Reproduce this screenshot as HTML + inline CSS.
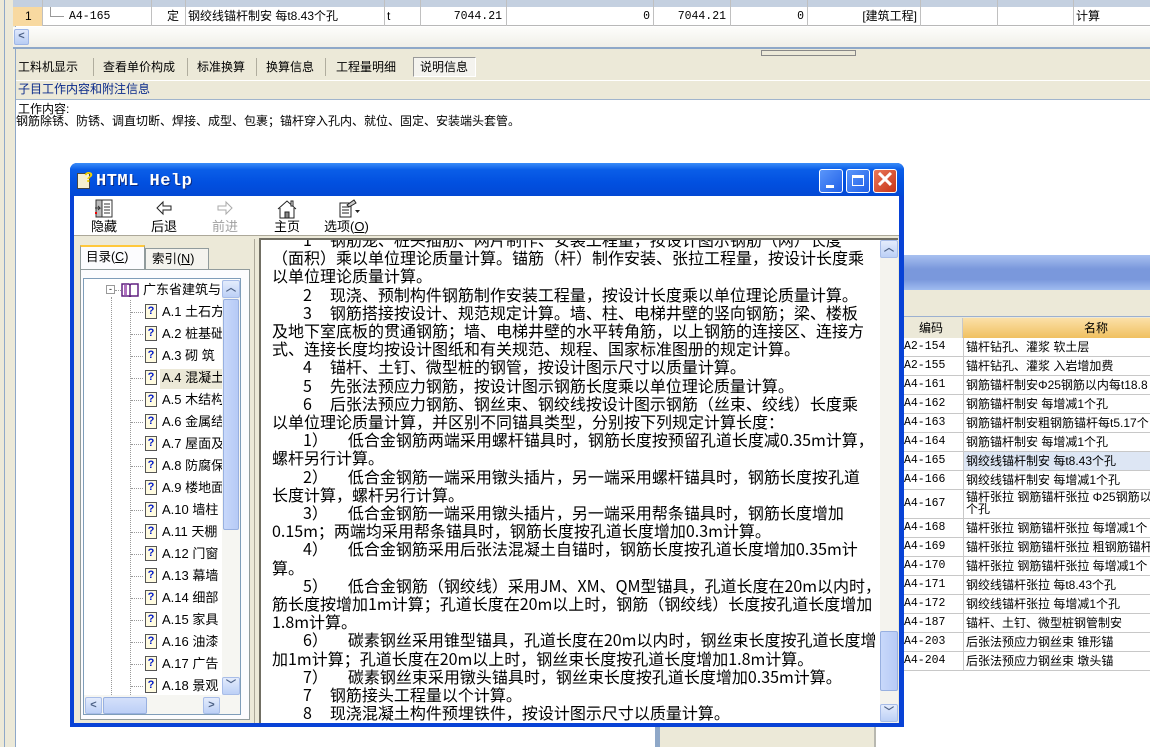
<!DOCTYPE html>
<html><head><meta charset="utf-8">
<style>
*{margin:0;padding:0;box-sizing:border-box}
body{width:1150px;height:747px;overflow:hidden;position:relative;background:#fff;font-family:"Liberation Sans","Noto Sans CJK SC",sans-serif;font-size:12px;color:#000}
.a{position:absolute}
.t{position:absolute;white-space:nowrap;line-height:14px}
.row{position:absolute;left:903px;width:247px;height:19px;border-bottom:1px solid #c8c8c8;background:#fff}
.row span{position:absolute;top:2px;white-space:nowrap;font-size:12px;line-height:14px}
.row .c{left:1px;font-family:"Liberation Mono",monospace;font-size:11.5px}
.row .n{left:63px}
.ln{position:absolute;left:270px;white-space:pre;font-family:"Noto Sans CJK SC",sans-serif;font-size:16px;line-height:18.2px;height:18.2px}
.ln i{display:inline-block}
.p{width:31px}.g{width:18px}.g2{width:20px}
.ti{position:absolute;white-space:nowrap;font-size:13px;line-height:16px}
.qi{position:absolute;width:12px;height:15px;border:1px solid #555;background:#fffbe0;color:#0018c8;font:bold 11px/13px "Liberation Sans",sans-serif;text-align:center}
.dot{position:absolute;border-top:1px dotted #999;height:0}
</style></head><body>

<div class="a" style="left:0;top:0;width:16px;height:747px;background:#ece9d8"></div>
<div class="a" style="left:4px;top:0;width:1px;height:747px;background:#8fa8c8"></div>
<div class="a" style="left:15px;top:0;width:1px;height:747px;background:#8fa8c8"></div>

<div class="a" style="left:13px;top:0;width:1137px;height:7px;background:#c4d0e0"></div>
<div class="a" style="left:13px;top:7px;width:1137px;height:19px;background:#fff;border-bottom:1px solid #b8b8b8"></div>
<div class="a" style="left:13px;top:7px;width:29px;height:19px;background:#f8d9a0"></div>
<div class="t" style="left:25px;top:9px">1</div>
<div class="a" style="left:50px;top:7px;width:1px;height:10px;background:#999"></div>
<div class="a" style="left:50px;top:16px;width:14px;height:1px;background:#999"></div>
<div class="t" style="left:69px;top:10px;font-family:'Liberation Mono',monospace;font-size:11.5px">A4-165</div>
<div class="t" style="left:167px;top:9px">定</div>
<div class="t" style="left:188px;top:9px">钢绞线锚杆制安 每t8.43个孔</div>
<div class="t" style="left:387px;top:9px">t</div>
<div class="t" style="left:444px;top:10px;width:58px;text-align:right;font-family:'Liberation Mono',monospace;font-size:11.5px">7044.21</div>
<div class="t" style="left:620px;top:10px;width:30px;text-align:right;font-family:'Liberation Mono',monospace;font-size:11.5px">0</div>
<div class="t" style="left:668px;top:10px;width:58px;text-align:right;font-family:'Liberation Mono',monospace;font-size:11.5px">7044.21</div>
<div class="t" style="left:774px;top:10px;width:30px;text-align:right;font-family:'Liberation Mono',monospace;font-size:11.5px">0</div>
<div class="t" style="left:860px;top:9px;width:57px;text-align:right">[建筑工程]</div>
<div class="t" style="left:1076px;top:9px">计算</div>
<div class="a" style="left:42px;top:0;width:1px;height:26px;background:#c0c0c0"></div>
<div class="a" style="left:151px;top:0;width:1px;height:26px;background:#c0c0c0"></div>
<div class="a" style="left:185px;top:0;width:1px;height:26px;background:#c0c0c0"></div>
<div class="a" style="left:384px;top:0;width:1px;height:26px;background:#c0c0c0"></div>
<div class="a" style="left:420px;top:0;width:1px;height:26px;background:#c0c0c0"></div>
<div class="a" style="left:506px;top:0;width:1px;height:26px;background:#c0c0c0"></div>
<div class="a" style="left:653px;top:0;width:1px;height:26px;background:#c0c0c0"></div>
<div class="a" style="left:730px;top:0;width:1px;height:26px;background:#c0c0c0"></div>
<div class="a" style="left:807px;top:0;width:1px;height:26px;background:#c0c0c0"></div>
<div class="a" style="left:920px;top:0;width:1px;height:26px;background:#c0c0c0"></div>
<div class="a" style="left:997px;top:0;width:1px;height:26px;background:#c0c0c0"></div>
<div class="a" style="left:1073px;top:0;width:1px;height:26px;background:#c0c0c0"></div>
<div class="a" style="left:13px;top:27px;width:1137px;height:20px;background:linear-gradient(#fdfdfb,#f0efe8)"></div>
<div class="a" style="left:14px;top:29px;width:15px;height:16px;background:linear-gradient(#dfe8fb,#b8cdf4);border:1px solid #9eb6e6;border-radius:2px;color:#4d6185;font:bold 11px/13px sans-serif;text-align:center">&lt;</div>
<div class="a" style="left:13px;top:47px;width:1137px;height:2px;background:#8fa8c8"></div>
<div class="a" style="left:16px;top:49px;width:1134px;height:31px;background:#ece9d8"></div>
<div class="a" style="left:761px;top:50px;width:95px;height:6px;border:1px solid #888;background:#ece9d8"></div>
<div class="t" style="left:18px;top:60px">工料机显示</div>
<div class="a" style="left:93px;top:58px;width:1px;height:18px;background:#b0ad9e"></div>
<div class="t" style="left:103px;top:60px">查看单价构成</div>
<div class="a" style="left:187px;top:58px;width:1px;height:18px;background:#b0ad9e"></div>
<div class="t" style="left:197px;top:60px">标准换算</div>
<div class="a" style="left:256px;top:58px;width:1px;height:18px;background:#b0ad9e"></div>
<div class="t" style="left:266px;top:60px">换算信息</div>
<div class="a" style="left:325px;top:58px;width:1px;height:18px;background:#b0ad9e"></div>
<div class="t" style="left:336px;top:60px">工程量明细</div>
<div class="a" style="left:413px;top:57px;width:63px;height:20px;border:1px solid #999;border-right-color:#fff;border-bottom-color:#fff;background:#f4f3ee"></div>
<div class="t" style="left:420px;top:60px">说明信息</div>
<div class="a" style="left:16px;top:80px;width:1134px;height:1px;background:#fff"></div>
<div class="a" style="left:16px;top:81px;width:1134px;height:19px;background:#ece9d8;border-bottom:1px solid #a0b4cc"></div>
<div class="t" style="left:18px;top:82px;color:#0a2a8a">子目工作内容和附注信息</div>
<div class="t" style="left:18px;top:103px;line-height:12px">工作内容:</div>
<div class="t" style="left:16px;top:115px;line-height:12px">钢筋除锈、防锈、调直切断、焊接、成型、包裹；锚杆穿入孔内、就位、固定、安装端头套管。</div>

<div class="a" style="left:655px;top:255px;width:495px;height:492px;background:#ece9d8;border-left:5px solid #8fa8c8"></div>
<div class="a" style="left:660px;top:255px;width:490px;height:35px;background:linear-gradient(#a8c0f0,#7a98dc 40%,#7a98dc 70%,#a0bcf0)"></div>
<div class="a" style="left:660px;top:290px;width:490px;height:27px;background:#ece9d8;border-bottom:1px solid #9cb0d0"></div>
<div class="a" style="left:876px;top:671px;width:274px;height:76px;background:#fff"></div>
<div class="a" style="left:874px;top:671px;width:2px;height:76px;background:#b8b8b0"></div>
<div class="a" style="left:903px;top:318px;width:60px;height:20px;background:#ece9d8;border-right:1px solid #c8c8c8"></div>
<div class="a" style="left:963px;top:318px;width:187px;height:20px;background:linear-gradient(#fbe0a8,#f0c060)"></div>
<div class="t" style="left:919px;top:321px">编码</div>
<div class="t" style="left:1084px;top:321px">名称</div>
<div class="row" style="top:338px"><span class="c">A2-154</span><span class="n">锚杆钻孔、灌浆 软土层</span></div>
<div class="row" style="top:357px"><span class="c">A2-155</span><span class="n">锚杆钻孔、灌浆 入岩增加费</span></div>
<div class="row" style="top:376px"><span class="c">A4-161</span><span class="n">钢筋锚杆制安Φ25钢筋以内每t18.8</span></div>
<div class="row" style="top:395px"><span class="c">A4-162</span><span class="n">钢筋锚杆制安 每增减1个孔</span></div>
<div class="row" style="top:414px"><span class="c">A4-163</span><span class="n">钢筋锚杆制安粗钢筋锚杆每t5.17个</span></div>
<div class="row" style="top:433px"><span class="c">A4-164</span><span class="n">钢筋锚杆制安 每增减1个孔</span></div>
<div class="row" style="top:452px"><span class="c">A4-165</span><span class="n" style="left:61px;top:0;height:18px;width:186px;background:#dde6f4;padding:2px 2px">钢绞线锚杆制安 每t8.43个孔</span></div>
<div class="row" style="top:471px"><span class="c">A4-166</span><span class="n">钢绞线锚杆制安 每增减1个孔</span></div>
<div class="row" style="top:490px;height:29px"><span class="c" style="top:7px">A4-167</span><span class="n" style="top:1px;line-height:12px">锚杆张拉 钢筋锚杆张拉 Φ25钢筋以<br>个孔</span></div>
<div class="row" style="top:519px"><span class="c">A4-168</span><span class="n">锚杆张拉 钢筋锚杆张拉 每增减1个</span></div>
<div class="row" style="top:538px"><span class="c">A4-169</span><span class="n">锚杆张拉 钢筋锚杆张拉 粗钢筋锚杆</span></div>
<div class="row" style="top:557px"><span class="c">A4-170</span><span class="n">锚杆张拉 钢筋锚杆张拉 每增减1个</span></div>
<div class="row" style="top:576px"><span class="c">A4-171</span><span class="n">钢绞线锚杆张拉 每t8.43个孔</span></div>
<div class="row" style="top:595px"><span class="c">A4-172</span><span class="n">钢绞线锚杆张拉 每增减1个孔</span></div>
<div class="row" style="top:614px"><span class="c">A4-187</span><span class="n">锚杆、土钉、微型桩钢管制安</span></div>
<div class="row" style="top:633px"><span class="c">A4-203</span><span class="n">后张法预应力钢丝束 锥形锚</span></div>
<div class="row" style="top:652px"><span class="c">A4-204</span><span class="n">后张法预应力钢丝束 墩头锚</span></div>
<div class="a" style="left:963px;top:338px;width:1px;height:333px;background:#c8c8c8"></div>

<!-- DIALOG -->
<div class="a" style="left:70px;top:163px;width:834px;height:564px;background:#0842d6;border-radius:7px 7px 0 0"></div>
<div class="a" style="left:70px;top:163px;width:834px;height:33px;border-radius:7px 7px 0 0;background:linear-gradient(#3a8cf8,#0a5ee8 20%,#0250e0 60%,#0348d4)"></div>
<div class="a" style="left:77px;top:173px;width:13px;height:16px;background:#f6f0d0;border:1px solid #444"></div>
<div class="a" style="left:84px;top:170px;color:#f4d200;font:bold 15px/15px 'Liberation Sans',sans-serif">?</div>
<div class="t" style="left:96px;top:172px;color:#fff;font:bold 17px/20px 'Liberation Mono',monospace;letter-spacing:0.5px;text-shadow:1px 1px #0a2a80">HTML Help</div>
<div class="a" style="left:819px;top:169px;width:24px;height:24px;border:1px solid #fff;border-radius:3px;background:linear-gradient(135deg,#5a96fa,#2060e8)"></div>
<div class="a" style="left:826px;top:185px;width:8px;height:3px;background:#fff"></div>
<div class="a" style="left:846px;top:169px;width:24px;height:24px;border:1px solid #fff;border-radius:3px;background:linear-gradient(135deg,#5a96fa,#2060e8)"></div>
<div class="a" style="left:852px;top:175px;width:12px;height:11px;border:1px solid #fff;border-top-width:3px"></div>
<div class="a" style="left:873px;top:169px;width:24px;height:24px;border:1px solid #fff;border-radius:3px;background:linear-gradient(135deg,#e8785a,#c83418)"></div>
<div class="a" style="left:873px;top:168px;width:24px;height:24px;color:#fff;font:bold 22px/24px 'Liberation Sans',sans-serif;text-align:center">✕</div>
<div class="a" style="left:74px;top:196px;width:825px;height:527px;background:#ece9d8"></div>
<div class="a" style="left:74px;top:196px;width:825px;height:40px;background:#fff;border-bottom:1px solid #aca899"></div>
<svg class="a" style="left:94px;top:199px" width="20" height="20" viewBox="0 0 20 20"><rect x="2" y="1" width="16" height="17" fill="#fff" stroke="#333"/><rect x="2" y="1" width="6" height="17" fill="#bbb" stroke="#333"/><path d="M10 5h6M10 8h6M10 11h6M10 14h6" stroke="#333"/><path d="M1 9h5l-2-2M6 9l-2 2" stroke="#333" fill="none"/><rect x="1" y="13" width="2" height="2" fill="#e00"/></svg>
<div class="t" style="left:91px;top:219px;font-size:13px;line-height:15px">隐藏</div>
<svg class="a" style="left:155px;top:200px" width="18" height="16"><path d="M2 8l6-6v4h8v4H8v4z" fill="#fff" stroke="#222"/></svg>
<div class="t" style="left:151px;top:219px;font-size:13px;line-height:15px">后退</div>
<svg class="a" style="left:216px;top:200px" width="18" height="16"><path d="M16 8l-6-6v4H2v4h8v4z" fill="#fff" stroke="#aaa"/></svg>
<div class="t" style="left:212px;top:219px;font-size:13px;line-height:15px;color:#a0a0a0">前进</div>
<svg class="a" style="left:276px;top:199px" width="22" height="20"><path d="M2 10L11 2l9 8M4 9v10h14V9" fill="#fff" stroke="#222"/><rect x="9" y="13" width="4" height="6" fill="#888" stroke="#222"/><rect x="15" y="2" width="2" height="5" fill="#fff" stroke="#222"/></svg>
<div class="t" style="left:274px;top:219px;font-size:13px;line-height:15px">主页</div>
<svg class="a" style="left:337px;top:199px" width="24" height="20"><rect x="3" y="4" width="11" height="14" fill="#fff" stroke="#222"/><path d="M5 8h7M5 11h7M5 14h7" stroke="#222"/><path d="M10 6l7-5 2 3-7 4z" fill="#ccc" stroke="#222"/><path d="M18 11h5l-2.5 3z" fill="#222"/></svg>
<div class="t" style="left:324px;top:219px;font-size:13px;line-height:15px">选项(<u>O</u>)</div>

<div class="a" style="left:76px;top:239px;width:179px;height:484px;background:#ece9d8;border-right:1px solid #aca899"></div>
<div class="a" style="left:80px;top:245px;width:65px;height:24px;background:#fcfcfe;border:1px solid #919b9c;border-bottom:none;border-top:2px solid #ffc83c"></div>
<div class="t" style="left:86px;top:250px;font-size:12.5px">目录(<u>C</u>)</div>
<div class="a" style="left:145px;top:248px;width:64px;height:21px;background:#f4f3ee;border:1px solid #919b9c;border-bottom:none"></div>
<div class="t" style="left:152px;top:252px;font-size:12.5px">索引(<u>N</u>)</div>
<div class="a" style="left:80px;top:269px;width:170px;height:451px;background:#fcfcfe;border:1px solid #919b9c"></div>
<div class="a" style="left:83px;top:278px;width:158px;height:437px;background:#fff;border:1px solid #7f9db9"></div>
<div class="a" style="left:111px;top:297px;width:0;height:400px;border-left:1px dotted #999"></div>
<div class="a" style="left:130px;top:300px;width:0;height:397px;border-left:1px dotted #999"></div>
<div class="a" style="left:106px;top:285px;width:9px;height:9px;border:1px solid #999;background:#fff;font:9px/7px sans-serif;text-align:center">-</div>
<div class="dot" style="left:115px;top:290px;width:6px"></div>
<svg class="a" style="left:121px;top:282px" width="18" height="15"><path d="M1 2h7l1 1 1-1h7v12h-7l-1 1-1-1H1z" fill="#fff" stroke="#602080" stroke-width="1.5"/><path d="M5 3v10M9 3v11" stroke="#602080" stroke-width="1.5"/><rect x="3" y="3" width="3" height="10" fill="#b070c0"/></svg>
<div class="ti" style="left:143px;top:282px">广东省建筑与</div>
<div class="a" style="left:160px;top:369px;width:62px;height:20px;background:#ece9d8"></div>
<div id="tree"></div>
<div class="a" style="left:222px;top:280px;width:18px;height:415px;background:#f6f6f2"></div>
<div class="a" style="left:222px;top:280px;width:18px;height:18px;background:linear-gradient(#e4ecfc,#bcd0f6);border:1px solid #a8bde8;border-radius:2px;color:#4d6185;font:bold 10px/15px sans-serif;text-align:center">︿</div>
<div class="a" style="left:223px;top:299px;width:16px;height:231px;background:linear-gradient(90deg,#c8d8fa,#b6caf6);border:1px solid #98b0e0;border-radius:2px"></div>
<div class="a" style="left:222px;top:677px;width:18px;height:18px;background:linear-gradient(#e4ecfc,#bcd0f6);border:1px solid #a8bde8;border-radius:2px;color:#4d6185;font:bold 10px/16px sans-serif;text-align:center">﹀</div>
<div class="a" style="left:84px;top:695px;width:156px;height:19px;background:#f6f6f2"></div>
<div class="a" style="left:85px;top:697px;width:17px;height:17px;background:linear-gradient(#e4ecfc,#bcd0f6);border:1px solid #a8bde8;border-radius:2px;color:#4d6185;font:bold 11px/15px sans-serif;text-align:center">&lt;</div>
<div class="a" style="left:103px;top:697px;width:44px;height:17px;background:linear-gradient(#d4e0fa,#bccff6);border:1px solid #98b0e0;border-radius:2px"></div>
<div class="a" style="left:203px;top:697px;width:17px;height:17px;background:linear-gradient(#e4ecfc,#bcd0f6);border:1px solid #a8bde8;border-radius:2px;color:#4d6185;font:bold 11px/15px sans-serif;text-align:center">&gt;</div>

<div class="a" style="left:257px;top:236px;width:642px;height:487px;background:#ece9d8"></div>
<div class="a" style="left:259px;top:238px;width:639px;height:485px;background:#fff;border-top:2px solid #716f64;border-left:2px solid #716f64;overflow:hidden">
<div style="position:absolute;left:-259px;top:-240px;width:1150px;height:747px">
<div class="ln" style="top:230px"><i class="p"></i>1<i class="g"></i>钢筋笼、桩头插筋、网片制作、安装工程量，按设计图示钢筋（网）长度</div>
<div class="ln" style="top:248.2px">（面积）乘以单位理论质量计算。锚筋（杆）制作安装、张拉工程量，按设计长度乘</div>
<div class="ln" style="top:266.4px">以单位理论质量计算。</div>
<div class="ln" style="top:284.6px"><i class="p"></i>2<i class="g"></i>现浇、预制构件钢筋制作安装工程量，按设计长度乘以单位理论质量计算。</div>
<div class="ln" style="top:302.8px"><i class="p"></i>3<i class="g"></i>钢筋搭接按设计、规范规定计算。墙、柱、电梯井壁的竖向钢筋；梁、楼板</div>
<div class="ln" style="top:321px">及地下室底板的贯通钢筋；墙、电梯井壁的水平转角筋，以上钢筋的连接区、连接方</div>
<div class="ln" style="top:339.2px">式、连接长度均按设计图纸和有关规范、规程、国家标准图册的规定计算。</div>
<div class="ln" style="top:357.4px"><i class="p"></i>4<i class="g"></i>锚杆、土钉、微型桩的钢管，按设计图示尺寸以质量计算。</div>
<div class="ln" style="top:375.6px"><i class="p"></i>5<i class="g"></i>先张法预应力钢筋，按设计图示钢筋长度乘以单位理论质量计算。</div>
<div class="ln" style="top:393.8px"><i class="p"></i>6<i class="g"></i>后张法预应力钢筋、钢丝束、钢绞线按设计图示钢筋（丝束、绞线）长度乘</div>
<div class="ln" style="top:412px">以单位理论质量计算，并区别不同锚具类型，分别按下列规定计算长度：</div>
<div class="ln" style="top:430.2px"><i class="p"></i>1）<i class="g2"></i>低合金钢筋两端采用螺杆锚具时，钢筋长度按预留孔道长度减0.35m计算，</div>
<div class="ln" style="top:448.4px">螺杆另行计算。</div>
<div class="ln" style="top:466.6px"><i class="p"></i>2）<i class="g2"></i>低合金钢筋一端采用镦头插片，另一端采用螺杆锚具时，钢筋长度按孔道</div>
<div class="ln" style="top:484.8px">长度计算，螺杆另行计算。</div>
<div class="ln" style="top:503px"><i class="p"></i>3）<i class="g2"></i>低合金钢筋一端采用镦头插片，另一端采用帮条锚具时，钢筋长度增加</div>
<div class="ln" style="top:521.2px">0.15m；两端均采用帮条锚具时，钢筋长度按孔道长度增加0.3m计算。</div>
<div class="ln" style="top:539.4px"><i class="p"></i>4）<i class="g2"></i>低合金钢筋采用后张法混凝土自锚时，钢筋长度按孔道长度增加0.35m计</div>
<div class="ln" style="top:557.6px">算。</div>
<div class="ln" style="top:575.8px"><i class="p"></i>5）<i class="g2"></i>低合金钢筋（钢绞线）采用JM、XM、QM型锚具，孔道长度在20m以内时，钢</div>
<div class="ln" style="top:594px">筋长度按增加1m计算；孔道长度在20m以上时，钢筋（钢绞线）长度按孔道长度增加</div>
<div class="ln" style="top:612.2px">1.8m计算。</div>
<div class="ln" style="top:630.4px"><i class="p"></i>6）<i class="g2"></i>碳素钢丝采用锥型锚具，孔道长度在20m以内时，钢丝束长度按孔道长度增</div>
<div class="ln" style="top:648.6px">加1m计算；孔道长度在20m以上时，钢丝束长度按孔道长度增加1.8m计算。</div>
<div class="ln" style="top:666.8px"><i class="p"></i>7）<i class="g2"></i>碳素钢丝束采用镦头锚具时，钢丝束长度按孔道长度增加0.35m计算。</div>
<div class="ln" style="top:685px"><i class="p"></i>7<i class="g"></i>钢筋接头工程量以个计算。</div>
<div class="ln" style="top:703.2px"><i class="p"></i>8<i class="g"></i>现浇混凝土构件预埋铁件，按设计图示尺寸以质量计算。</div>
<div class="ln" style="top:721.4px"><i class="p"></i>9<i class="g"></i>铁件工程量，按设计图示尺寸以质量计算。</div>
</div>
</div>
<div class="a" style="left:880px;top:240px;width:18px;height:483px;background:#f4f3ee"></div>
<div class="a" style="left:880px;top:240px;width:18px;height:18px;background:linear-gradient(#e4ecfc,#bcd0f6);border:1px solid #a8bde8;border-radius:2px;color:#4d6185;font:bold 10px/15px sans-serif;text-align:center">︿</div>
<div class="a" style="left:880px;top:631px;width:18px;height:60px;background:linear-gradient(90deg,#c8d8fa,#b6caf6);border:1px solid #98b0e0;border-radius:2px"></div>
<div class="a" style="left:880px;top:704px;width:18px;height:18px;background:linear-gradient(#e4ecfc,#bcd0f6);border:1px solid #a8bde8;border-radius:2px;color:#4d6185;font:bold 10px/16px sans-serif;text-align:center">﹀</div>

<script>
var names=["A.1 土石方","A.2 桩基础","A.3 砌 筑","A.4 混凝土","A.5 木结构","A.6 金属结","A.7 屋面及","A.8 防腐保","A.9 楼地面","A.10 墙柱","A.11 天棚","A.12 门窗","A.13 幕墙","A.14 细部","A.15 家具","A.16 油漆","A.17 广告","A.18 景观"];
var h="";
for(var i=0;i<names.length;i++){var y=304+i*22;
h+='<div class="dot" style="left:131px;top:'+(y+8)+'px;width:12px"></div>';
h+='<div class="qi" style="left:145px;top:'+y+'px">?</div>';
h+='<div class="ti" style="left:162px;top:'+y+'px;width:60px;overflow:hidden">'+names[i]+'</div>';}
document.getElementById('tree').innerHTML=h;
</script>
</body></html>
